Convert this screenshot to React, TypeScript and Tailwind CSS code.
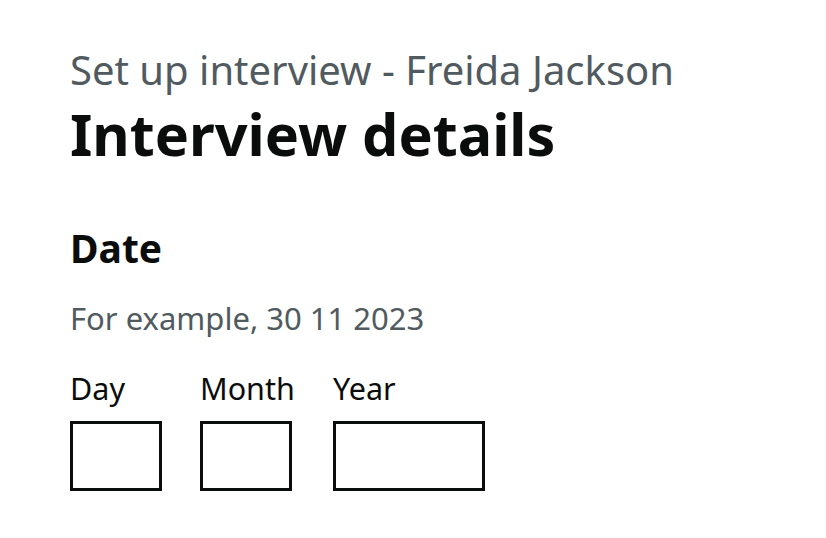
export default function App() {
  const font = { fontFamily: '"Noto Sans", Arial, sans-serif' };
  return (
    <div className="w-[826px] h-[538px] bg-white text-[#0b0c0c] pl-[70px] pt-[46px]" style={font}>
      <div className="text-[40px] leading-[48px] text-[#505a5f]">Set up interview - Freida Jackson</div>
      <h1 className="mt-[8px] text-[57.5px] leading-[64px] font-bold">Interview details</h1>
      <div className="mt-[60px] text-[39px] leading-[44px] font-bold">Date</div>
      <div className="mt-[30px] text-[31px] leading-[36px] text-[#505a5f]">For example, 30 11 2023</div>
      <div className="mt-[34px] flex">
        <div className="mr-[38px] w-[92px] flex flex-col">
          <label className="text-[30.5px] leading-[36px] whitespace-nowrap">Day</label>
          <input className="mt-[15px] w-[92px] h-[70px] border-[3px] border-[#0b0c0c] outline-none" />
        </div>
        <div className="mr-[41px] w-[92px] flex flex-col">
          <label className="text-[30.5px] leading-[36px] whitespace-nowrap">Month</label>
          <input className="mt-[15px] w-[92px] h-[70px] border-[3px] border-[#0b0c0c] outline-none" />
        </div>
        <div className="w-[152px] flex flex-col">
          <label className="text-[30.5px] leading-[36px] whitespace-nowrap">Year</label>
          <input className="mt-[15px] w-[152px] h-[70px] border-[3px] border-[#0b0c0c] outline-none" />
        </div>
      </div>
    </div>
  );
}
